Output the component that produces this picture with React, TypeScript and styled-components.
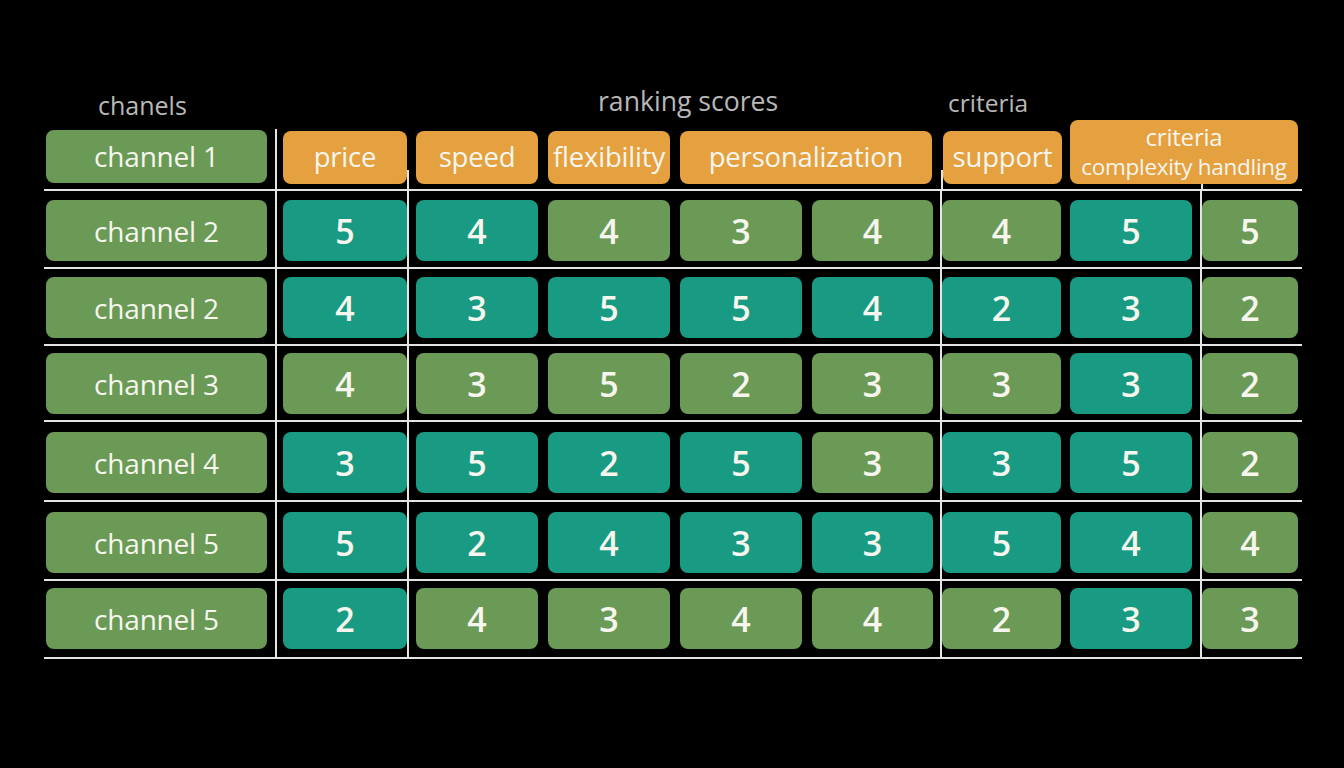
import React from "react";
import styled, { createGlobalStyle } from "styled-components";

const Global = createGlobalStyle`
  html, body { margin: 0; padding: 0; background: #000; }
  body { font-family: "Open Sans", "Noto Sans", sans-serif; }
`;

const GREEN = "#6a9a56";
const TEAL = "#189b82";
const ORANGE = "#e5a03f";
const LINE = "#e4e4e4";
const TEXT = "#f6f6ee";

const Page = styled.div`
  width: 1344px;
  height: 768px;
  background: #000;
  overflow: hidden;
`;

const Board = styled.div`
  margin-left: 44px;
  width: 1258px;
  padding-top: 86px;
`;

const TitleRow = styled.div`
  display: flex;
  height: 32px;
`;

const Title = styled.div<{ $w?: number; $pl: number; $dy: number; $size: number }>`
  ${(p) => (p.$w ? `width: ${p.$w}px; flex: none;` : "flex: 1;")}
  box-sizing: border-box;
  padding-left: ${(p) => p.$pl}px;
  margin-top: ${(p) => p.$dy}px;
  color: #b8b8b8;
  font-size: ${(p) => p.$size}px;
  line-height: 32px;
  white-space: nowrap;
`;

const HeaderRow = styled.div`
  display: flex;
  align-items: flex-end;
  height: 71px;
  border-bottom: 2px solid ${LINE};
`;

const Row = styled.div<{ $h: number }>`
  display: flex;
  align-items: stretch;
  height: ${(p) => p.$h - 2}px;
  border-bottom: 2px solid ${LINE};
`;

const Divider = styled.div<{ $ml: number; $h?: number }>`
  flex: none;
  width: 2px;
  margin-left: ${(p) => p.$ml}px;
  background: ${LINE};
  ${(p) => (p.$h ? `height: ${p.$h}px; align-self: flex-end;` : "align-self: stretch;")}
`;

const Box = styled.div<{ $w: number; $ml: number; $bg: string }>`
  flex: none;
  box-sizing: border-box;
  width: ${(p) => p.$w}px;
  margin-left: ${(p) => p.$ml}px;
  background: ${(p) => p.$bg};
  border-radius: 8px;
  color: ${TEXT};
  display: flex;
  align-items: center;
  justify-content: center;
  white-space: nowrap;
`;

const HeadCell = styled(Box)<{ $h: number; $mb: number }>`
  position: relative;
  height: ${(p) => p.$h}px;
  margin-bottom: ${(p) => p.$mb}px;
  padding-bottom: 3px;
  font-size: 27.5px;
  letter-spacing: -0.2px;
`;

const ChannelHead = styled(HeadCell)`
  font-size: 28px;
  padding-bottom: 2px;
`;

const CriteriaHead = styled(HeadCell)`
  flex-direction: column;
  justify-content: flex-start;
  padding: 2px 0 0;
  &::after {
    content: "";
    position: absolute;
    left: 131px;
    bottom: -5px;
    width: 2px;
    height: 5px;
    background: ${LINE};
  }
`;

const CritTop = styled.span`
  font-size: 24px;
  line-height: 30px;
  height: 30px;
`;

const CritBottom = styled.span`
  font-size: 22.5px;
  line-height: 30px;
  height: 30px;
  letter-spacing: -0.3px;
`;

const DataCell = styled(Box)<{ $top: number }>`
  margin-top: ${(p) => p.$top}px;
  height: 61px;
  font-size: 34px;
  font-weight: 600;
`;

const ChannelCell = styled(DataCell)`
  font-size: 28px;
  font-weight: 400;
  letter-spacing: -0.2px;
`;

type C = "g" | "t";
const rows: { name: string; h: number; top: number; vals: number[]; cols: C[] }[] = [
  { name: "channel 2", h: 78, top: 9, vals: [5, 4, 4, 3, 4, 4, 5, 5], cols: ["t", "t", "g", "g", "g", "g", "t", "g"] },
  { name: "channel 2", h: 77, top: 8, vals: [4, 3, 5, 5, 4, 2, 3, 2], cols: ["t", "t", "t", "t", "t", "t", "t", "g"] },
  { name: "channel 3", h: 76, top: 7, vals: [4, 3, 5, 2, 3, 3, 3, 2], cols: ["g", "g", "g", "g", "g", "g", "t", "g"] },
  { name: "channel 4", h: 80, top: 10, vals: [3, 5, 2, 5, 3, 3, 5, 2], cols: ["t", "t", "t", "t", "g", "t", "t", "g"] },
  { name: "channel 5", h: 79, top: 10, vals: [5, 2, 4, 3, 3, 5, 4, 4], cols: ["t", "t", "t", "t", "t", "t", "t", "g"] },
  { name: "channel 5", h: 78, top: 7, vals: [2, 4, 3, 4, 4, 2, 3, 3], cols: ["t", "g", "g", "g", "g", "g", "t", "g"] },
];

// score columns: width, margin-left, divider-before margin
const scoreCols: { w: number; ml: number; div?: number }[] = [
  { w: 124, ml: 6 },
  { w: 122, ml: 7, div: 0 },
  { w: 122, ml: 10 },
  { w: 122, ml: 10 },
  { w: 121, ml: 10 },
  { w: 119, ml: 0, div: 7 },
  { w: 122, ml: 9 },
  { w: 96, ml: 0, div: 8 },
];

const bg = (c: C) => (c === "g" ? GREEN : TEAL);

export default function App() {
  return (
    <Page>
      <Global />
      <Board>
        <TitleRow>
          <Title $w={554} $pl={54} $dy={3} $size={25}>chanels</Title>
          <Title $w={350} $pl={0} $dy={-1} $size={26.6}>ranking scores</Title>
          <Title $pl={0} $dy={1} $size={24.5}>criteria</Title>
        </TitleRow>

        <HeaderRow>
          <ChannelHead $w={221} $ml={2} $h={53} $mb={6} $bg={GREEN}>channel 1</ChannelHead>
          <Divider $ml={8} $h={60} />
          <HeadCell $w={124} $ml={6} $h={53} $mb={5} $bg={ORANGE}>price</HeadCell>
          <Divider $ml={0} $h={19} />
          <HeadCell $w={122} $ml={7} $h={53} $mb={5} $bg={ORANGE}>speed</HeadCell>
          <HeadCell $w={122} $ml={10} $h={53} $mb={5} $bg={ORANGE}>flexibility</HeadCell>
          <HeadCell $w={252} $ml={10} $h={53} $mb={5} $bg={ORANGE}>personalization</HeadCell>
          <Divider $ml={9} $h={19} />
          <HeadCell $w={119} $ml={0} $h={53} $mb={5} $bg={ORANGE}>support</HeadCell>
          <CriteriaHead $w={228} $ml={8} $h={64} $mb={5} $bg={ORANGE}>
            <CritTop>criteria</CritTop>
            <CritBottom>complexity handling</CritBottom>
          </CriteriaHead>
        </HeaderRow>

        {rows.map((r, i) => (
          <Row key={i} $h={r.h}>
            <ChannelCell $w={221} $ml={2} $top={r.top} $bg={GREEN}>{r.name}</ChannelCell>
            <Divider $ml={8} />
            {scoreCols.map((c, j) => (
              <React.Fragment key={j}>
                {c.div !== undefined && <Divider $ml={c.div} />}
                <DataCell $w={c.w} $ml={c.ml} $top={r.top} $bg={bg(r.cols[j])}>
                  {r.vals[j]}
                </DataCell>
              </React.Fragment>
            ))}
          </Row>
        ))}
      </Board>
    </Page>
  );
}
